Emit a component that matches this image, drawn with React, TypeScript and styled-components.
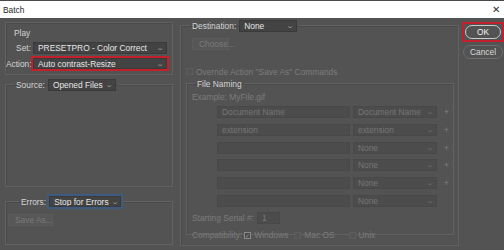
import styled, { createGlobalStyle } from 'styled-components'

const GlobalStyle = createGlobalStyle`
  html, body {
    margin: 0;
    padding: 0;
    background: #535353;
  }
  body {
    font-family: "Liberation Sans", Arial, sans-serif;
    font-size: 8.4px;
    color: #d4d4d4;
  }
`

const Window = styled.div`
  width: 504px;
  height: 250px;
  display: flex;
  flex-direction: column;
  background: #535353;
  overflow: hidden;
`

const TitleBar = styled.div`
  height: 17px;
  flex-shrink: 0;
  border-top: 1px solid #4a4a4a;
  background: #fff;
  display: flex;
  align-items: center;
  justify-content: space-between;
  padding: 0 4px 0 3px;
  color: #1e1e1e;
`

const Close = styled.span`
  font-size: 10px;
  color: #333;
`

const Body = styled.div`
  flex: 1;
  display: flex;
  align-items: flex-start;
  padding: 0 1px 0 5px;
`

const LeftCol = styled.div`
  width: 168px;
  flex-shrink: 0;
  display: flex;
  flex-direction: column;
`

const RightCol = styled.div`
  width: 279px;
  flex-shrink: 0;
  margin-left: 7px;
  margin-top: 1px;
`

const ButtonCol = styled.div`
  width: 40px;
  margin-left: 4px;
  margin-top: 5px;
  display: flex;
  flex-direction: column;
  gap: 3px;
`

const Box = styled.fieldset<{ $h: number; $mt?: number }>`
  margin: ${p => p.$mt ?? 0}px 0 0 0;
  padding: 0;
  height: ${p => p.$h}px;
  box-sizing: border-box;
  border: 1px solid #626262;
  box-shadow: inset 1px 1px 0 #4a4a4a;
  min-width: 0;
`

const InnerBox = styled(Box)`
  margin: 0 4px 0 5px;
`

const Legend = styled.legend<{ $ml: number }>`
  margin-left: ${p => p.$ml}px;
  padding: 0 2px;
  display: flex;
  align-items: center;
  gap: 3px;
  height: 13px;
  white-space: nowrap;
`

const PlayBox = styled.div`
  margin-top: 4px;
  height: 53px;
  box-sizing: border-box;
  border: 1px solid #626262;
  box-shadow: inset 1px 1px 0 #4a4a4a;
  display: flex;
  flex-direction: column;
  padding: 4px 0 0 0;
`

const GroupTitle = styled.div`
  padding-left: 8px;
  height: 12px;
  line-height: 12px;
`

const Row = styled.div<{ $mt?: number; $pl?: number }>`
  display: flex;
  align-items: center;
  height: 11px;
  margin-top: ${p => p.$mt ?? 0}px;
  padding-left: ${p => p.$pl ?? 0}px;
`

const RowLabel = styled.span`
  width: 25px;
  text-align: right;
  margin-right: 2px;
  white-space: nowrap;
`

const Highlight = styled.div<{ $color: string }>`
  outline: 2px solid ${p => p.$color};
  display: flex;
  flex-shrink: 0;
`

const Select = styled.div<{ $w: number; $h?: number }>`
  width: ${p => p.$w}px;
  height: ${p => p.$h ?? 12}px;
  flex-shrink: 0;
  box-sizing: border-box;
  background: #434343;
  border: 1px solid #3a3a3a;
  display: flex;
  align-items: center;
  justify-content: space-between;
  padding: 0 3px 0 4px;
  color: #e6e6e6;
  white-space: nowrap;
  overflow: hidden;
`

const Caret = styled.span<{ $dim?: boolean }>`
  font-size: 7px;
  color: ${p => (p.$dim ? '#6e6e6e' : '#9a9a9a')};
  transform: scaleX(1.4);
  margin-left: 3px;
`

const GhostButton = styled.div<{ $w: number }>`
  width: ${p => p.$w}px;
  height: 12px;
  flex-shrink: 0;
  box-sizing: border-box;
  border: 1px solid #5c5c5c;
  background: #575757;
  color: #7a7a7a;
  display: flex;
  align-items: center;
  padding-left: 6px;
  white-space: nowrap;
`

const Pill = styled.div<{ $primary?: boolean }>`
  height: 14px;
  box-sizing: border-box;
  border-radius: 8px;
  border: 1px solid ${p => (p.$primary ? '#c9c9c9' : '#6c6c6c')};
  background: #535353;
  color: ${p => (p.$primary ? '#f2f2f2' : '#dadada')};
  display: flex;
  align-items: center;
  justify-content: center;
`

const OkFrame = styled.div`
  border: 2px solid #c3202b;
  padding: 1px;
  margin: -1px 0 0 -1px;
  width: 36px;
`

const Dim = styled.span<{ $mr?: number }>`
  color: #7c7c7c;
  white-space: nowrap;
  margin-right: ${p => p.$mr ?? 0}px;
`

const Check = styled.span<{ $on?: boolean }>`
  width: 7px;
  height: 7px;
  flex-shrink: 0;
  box-sizing: border-box;
  border: 1px solid ${p => (p.$on ? '#8a8a8a' : '#5d5d5d')};
  background: ${p => (p.$on ? '#4a4a4a' : '#555')};
  display: inline-flex;
  align-items: center;
  justify-content: center;
  font-size: 6px;
  color: #9a9a9a;
  margin-right: 3px;
`

const NamingGrid = styled.div`
  display: grid;
  grid-template-columns: 133px 84px 14px;
  grid-auto-rows: 12px;
  column-gap: 3px;
  row-gap: 5.8px;
  margin: 4px 0 0 30px;
`

const NameInput = styled.div`
  box-sizing: border-box;
  background: #4c4c4c;
  border: 1px solid #484848;
  color: #767676;
  display: flex;
  align-items: center;
  padding-left: 4px;
  white-space: nowrap;
`

const NameSelect = styled(NameInput)`
  justify-content: space-between;
  padding-right: 3px;
`

const Plus = styled.span`
  color: #808080;
  display: flex;
  align-items: center;
  padding-left: 4px;
`

const SerialInput = styled.span`
  width: 23px;
  height: 12px;
  box-sizing: border-box;
  background: #4c4c4c;
  border: 1px solid #484848;
  color: #7a7a7a;
  padding-left: 4px;
  margin-left: 3px;
  display: inline-flex;
  align-items: center;
`

const rows = [
  ['Document Name', 'Document Name', true],
  ['extension', 'extension', true],
  ['', 'None', true],
  ['', 'None', true],
  ['', 'None', true],
  ['', 'None', false],
] as const

export default function App() {
  return (
    <>
      <GlobalStyle />
      <Window>
        <TitleBar>
          <span>Batch</span>
          <Close>✕</Close>
        </TitleBar>
        <Body>
          <LeftCol>
            <PlayBox>
              <GroupTitle>Play</GroupTitle>
              <Row $mt={3}>
                <RowLabel>Set:</RowLabel>
                <Select $w={134}>
                  PRESETPRO - Color Correct<Caret>⌄</Caret>
                </Select>
              </Row>
              <Row $mt={5}>
                <RowLabel>Action:</RowLabel>
                <Highlight $color="#c3202b">
                  <Select $w={134} $h={11}>
                    Auto contrast-Resize<Caret>⌄</Caret>
                  </Select>
                </Highlight>
              </Row>
            </PlayBox>
            <Box $h={109} $mt={3}>
              <Legend $ml={8}>
                Source:
                <Select $w={68}>
                  Opened Files<Caret>⌄</Caret>
                </Select>
              </Legend>
            </Box>
            <Box $h={50} $mt={8}>
              <Legend $ml={13}>
                Errors:
                <Highlight $color="#3d5a80">
                  <Select $w={72} $h={11}>
                    Stop for Errors<Caret>⌄</Caret>
                  </Select>
                </Highlight>
              </Legend>
              <Row $mt={6} $pl={2}>
                <GhostButton $w={45}>Save As...</GhostButton>
              </Row>
            </Box>
          </LeftCol>
          <RightCol>
            <Box $h={227}>
              <Legend $ml={9}>
                Destination:
                <Select $w={58}>
                  None<Caret>⌄</Caret>
                </Select>
              </Legend>
              <Row $mt={6} $pl={11}>
                <GhostButton $w={37}>Choose...</GhostButton>
              </Row>
              <Row $mt={17} $pl={5}>
                <Check />
                <Dim>Override Action "Save As" Commands</Dim>
              </Row>
              <InnerBox $h={158}>
                <Legend $ml={8}>File Naming</Legend>
                <Row $mt={1} $pl={5}>
                  <Dim>Example: MyFile.gif</Dim>
                </Row>
                <NamingGrid>
                  {rows.map(([a, b, plus], i) => (
                    <div key={i} style={{ display: 'contents' }}>
                      <NameInput>{a}</NameInput>
                      <NameSelect>
                        {b}
                        <Caret $dim>⌄</Caret>
                      </NameSelect>
                      <Plus>{plus ? '+' : ''}</Plus>
                    </div>
                  ))}
                </NamingGrid>
                <Row $mt={5} $pl={5} style={{ height: 12 }}>
                  <Dim>Starting Serial #:</Dim>
                  <SerialInput>1</SerialInput>
                </Row>
                <Row $mt={6} $pl={5}>
                  <Dim $mr={2}>Compatibility:</Dim>
                  <Check $on>✓</Check>
                  <Dim $mr={6}>Windows</Dim>
                  <Check />
                  <Dim $mr={14}>Mac OS</Dim>
                  <Check />
                  <Dim>Unix</Dim>
                </Row>
              </InnerBox>
            </Box>
          </RightCol>
          <ButtonCol>
            <OkFrame>
              <Pill $primary>OK</Pill>
            </OkFrame>
            <Pill>Cancel</Pill>
          </ButtonCol>
        </Body>
      </Window>
    </>
  )
}
